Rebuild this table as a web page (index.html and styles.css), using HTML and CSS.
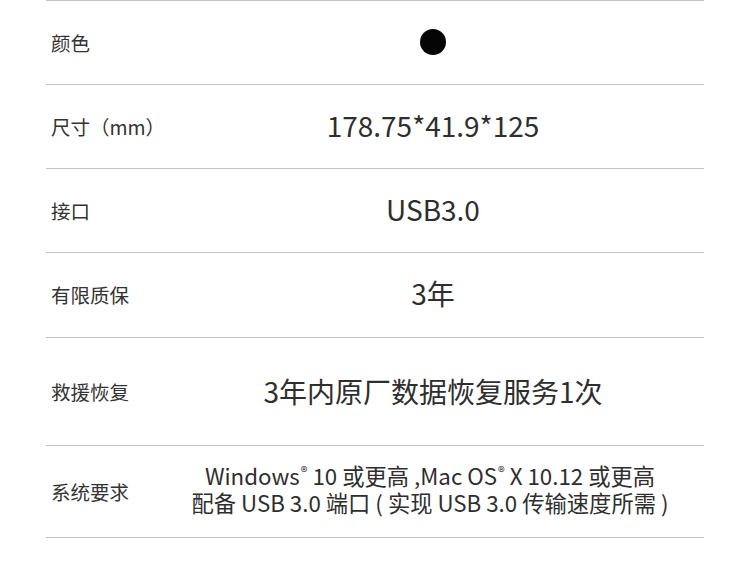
FILE: index.html
```html
<!DOCTYPE html>
<html>
<head>
    <title>产品规格</title>
    <link rel="stylesheet" href="styles.css">
</head>
<body>
    <div class="spec-table">
        <div class="spec-row row-color">
            <div class="spec-label">颜色</div>
            <div class="spec-value"><span class="swatch"></span></div>
        </div>
        <div class="spec-row">
            <div class="spec-label">尺寸（mm）</div>
            <div class="spec-value">178.75*41.9*125</div>
        </div>
        <div class="spec-row">
            <div class="spec-label">接口</div>
            <div class="spec-value">USB3.0</div>
        </div>
        <div class="spec-row row-tall">
            <div class="spec-label">有限质保</div>
            <div class="spec-value">3年</div>
        </div>
        <div class="spec-row row-rescue">
            <div class="spec-label">救援恢复</div>
            <div class="spec-value">3年内原厂数据恢复服务1次</div>
        </div>
        <div class="spec-row row-system">
            <div class="spec-label">系统要求</div>
            <div class="spec-value small">
                <div class="line">Windows<span class="reg">®</span> 10 或更高 ,Mac OS<span class="reg">®</span> X 10.12 或更高</div>
                <div class="line">配备 USB 3.0 端口 ( 实现 USB 3.0 传输速度所需 )</div>
            </div>
        </div>
    </div>
</body>
</html>
```

FILE: styles.css
```css
body {
    margin: 0;
    background: #fff;
    font-family: "Noto Sans CJK SC", "Noto Sans", sans-serif;
    color: #333;
}

.spec-table {
    width: 658px;
    margin-left: 46px;
    border-bottom: 1px solid #c4c4c4;
}

.spec-row {
    display: grid;
    grid-template-columns: 116px 1fr;
    align-items: center;
    height: 84px;
    box-sizing: border-box;
    border-top: 1px solid #c4c4c4;
}

.row-tall {
    height: 85px;
}

.row-rescue {
    height: 108px;
}

.row-system {
    height: 92px;
}

.spec-label {
    padding-left: 5px;
    font-size: 19.5px;
    line-height: 24px;
    color: #333;
}

.spec-value {
    text-align: center;
    font-size: 28px;
    line-height: 34px;
    color: #2e2e2e;
    padding-bottom: 4px;
}

.row-rescue .spec-value {
    padding-bottom: 2px;
}

.spec-value.small {
    font-size: 22.3px;
    padding-right: 6px;
    padding-bottom: 6px;
}

.line {
    height: 27px;
    line-height: 27px;
    overflow: visible;
}

.reg {
    font-size: 14px;
    vertical-align: 8px;
    line-height: 0;
    margin-left: 1px;
}

.row-color .spec-value {
    display: flex;
    justify-content: center;
    padding-bottom: 2px;
}

.swatch {
    width: 26px;
    height: 26px;
    border-radius: 50%;
    background: #050505;
}
```
